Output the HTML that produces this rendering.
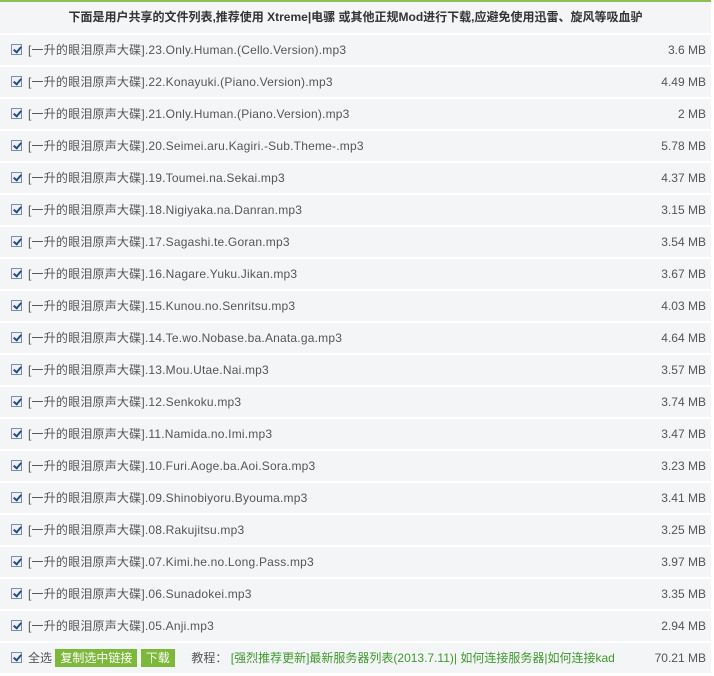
<!DOCTYPE html>
<html><head><meta charset="utf-8"><style>
body{margin:0;background:#fff;width:714px;height:676px;overflow:hidden;font-family:"Liberation Sans","Noto Sans CJK SC",sans-serif;font-size:12px;color:#555}
.top{height:2px;background:#8cc152;width:711px}
.h{height:31px;line-height:31px;background:#f3f5f7;width:711px;text-align:center;font-weight:bold;color:#333;font-size:12px;margin-bottom:2px}
.r{height:30px;line-height:30px;background:#f3f5f7;width:711px;margin-bottom:2px;position:relative}
.cb{position:absolute;left:11px;top:9px;width:11px;height:11px;border:1px solid #7a8ea8;background:#eef2f7;box-sizing:border-box}
.cb:after{content:"";position:absolute;left:3px;top:0px;width:3px;height:6px;border:solid #2a4a8a;border-width:0 2px 2px 0;transform:rotate(40deg)}
.n{position:absolute;left:28px;letter-spacing:0.2px}
.s{position:absolute;right:5px}
.btn{display:inline-block;background:#7cb83a;color:#fff;padding:0 5px;line-height:18px;height:18px}
.g{color:#3e9a2c}
</style></head><body>
<div class="top"></div>
<div class="h">下面是用户共享的文件列表,推荐使用 Xtreme|电骡 或其他正规Mod进行下载,应避免使用迅雷、旋风等吸血驴</div>
<div class="r"><span class="cb"></span><span class="n">[一升的眼泪原声大碟].23.Only.Human.(Cello.Version).mp3</span><span class="s">3.6 MB</span></div>
<div class="r"><span class="cb"></span><span class="n">[一升的眼泪原声大碟].22.Konayuki.(Piano.Version).mp3</span><span class="s">4.49 MB</span></div>
<div class="r"><span class="cb"></span><span class="n">[一升的眼泪原声大碟].21.Only.Human.(Piano.Version).mp3</span><span class="s">2 MB</span></div>
<div class="r"><span class="cb"></span><span class="n">[一升的眼泪原声大碟].20.Seimei.aru.Kagiri.-Sub.Theme-.mp3</span><span class="s">5.78 MB</span></div>
<div class="r"><span class="cb"></span><span class="n">[一升的眼泪原声大碟].19.Toumei.na.Sekai.mp3</span><span class="s">4.37 MB</span></div>
<div class="r"><span class="cb"></span><span class="n">[一升的眼泪原声大碟].18.Nigiyaka.na.Danran.mp3</span><span class="s">3.15 MB</span></div>
<div class="r"><span class="cb"></span><span class="n">[一升的眼泪原声大碟].17.Sagashi.te.Goran.mp3</span><span class="s">3.54 MB</span></div>
<div class="r"><span class="cb"></span><span class="n">[一升的眼泪原声大碟].16.Nagare.Yuku.Jikan.mp3</span><span class="s">3.67 MB</span></div>
<div class="r"><span class="cb"></span><span class="n">[一升的眼泪原声大碟].15.Kunou.no.Senritsu.mp3</span><span class="s">4.03 MB</span></div>
<div class="r"><span class="cb"></span><span class="n">[一升的眼泪原声大碟].14.Te.wo.Nobase.ba.Anata.ga.mp3</span><span class="s">4.64 MB</span></div>
<div class="r"><span class="cb"></span><span class="n">[一升的眼泪原声大碟].13.Mou.Utae.Nai.mp3</span><span class="s">3.57 MB</span></div>
<div class="r"><span class="cb"></span><span class="n">[一升的眼泪原声大碟].12.Senkoku.mp3</span><span class="s">3.74 MB</span></div>
<div class="r"><span class="cb"></span><span class="n">[一升的眼泪原声大碟].11.Namida.no.Imi.mp3</span><span class="s">3.47 MB</span></div>
<div class="r"><span class="cb"></span><span class="n">[一升的眼泪原声大碟].10.Furi.Aoge.ba.Aoi.Sora.mp3</span><span class="s">3.23 MB</span></div>
<div class="r"><span class="cb"></span><span class="n">[一升的眼泪原声大碟].09.Shinobiyoru.Byouma.mp3</span><span class="s">3.41 MB</span></div>
<div class="r"><span class="cb"></span><span class="n">[一升的眼泪原声大碟].08.Rakujitsu.mp3</span><span class="s">3.25 MB</span></div>
<div class="r"><span class="cb"></span><span class="n">[一升的眼泪原声大碟].07.Kimi.he.no.Long.Pass.mp3</span><span class="s">3.97 MB</span></div>
<div class="r"><span class="cb"></span><span class="n">[一升的眼泪原声大碟].06.Sunadokei.mp3</span><span class="s">3.35 MB</span></div>
<div class="r"><span class="cb"></span><span class="n">[一升的眼泪原声大碟].05.Anji.mp3</span><span class="s">2.94 MB</span></div>
<div class="r"><span class="cb"></span><span class="n" style="letter-spacing:0">全选 <span class="btn">复制选中链接</span> <span class="btn">下载</span> &nbsp; &nbsp; 教程： <span class="g">[强烈推荐更新]最新服务器列表(2013.7.11)| 如何连接服务器|如何连接kad</span></span><span class="s">70.21 MB</span></div>
</body></html>
